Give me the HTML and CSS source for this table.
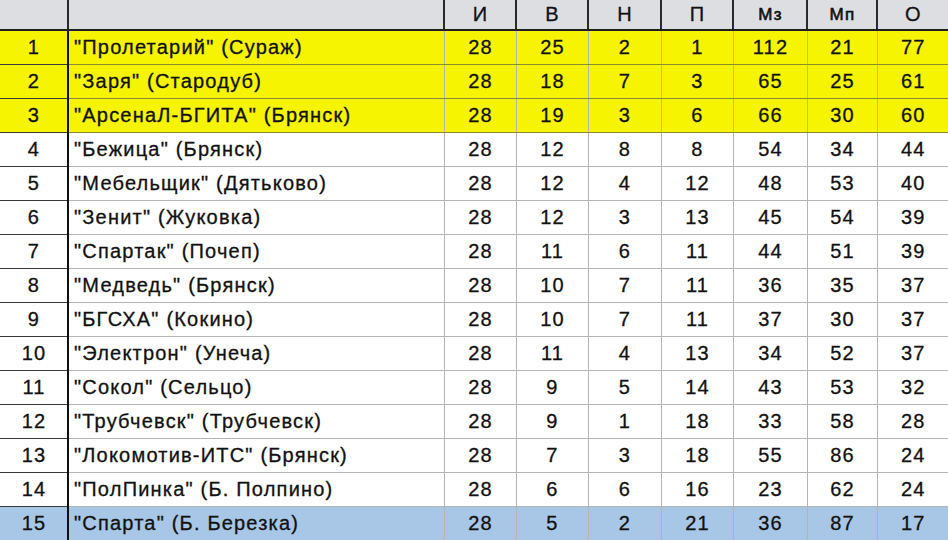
FILE: index.html
```html
<!DOCTYPE html>
<html lang="ru">
<head>
<meta charset="utf-8">
<title>Таблица</title>
<link rel="stylesheet" href="styles.css">
</head>
<body>
<table class="grid">
  <colgroup>
    <col class="c-num"><col class="c-name"><col class="c-a"><col class="c-a"><col class="c-b"><col class="c-a"><col class="c-c"><col class="c-d"><col class="c-e">
  </colgroup>
  <thead>
    <tr class="head">
      <th class="num"></th><th class="name"></th>
      <th>И</th><th>В</th><th>Н</th><th>П</th><th class="small">Мз</th><th class="small">Мп</th><th>О</th>
    </tr>
  </thead>
  <tbody>
    <tr class="yellow"><td class="num">1</td><td class="name">"Пролетарий" (Сураж)</td><td>28</td><td>25</td><td>2</td><td>1</td><td>112</td><td>21</td><td>77</td></tr>
    <tr class="yellow"><td class="num">2</td><td class="name">"Заря" (Стародуб)</td><td>28</td><td>18</td><td>7</td><td>3</td><td>65</td><td>25</td><td>61</td></tr>
    <tr class="yellow"><td class="num">3</td><td class="name">"АрсенаЛ-БГИТА" (Брянск)</td><td>28</td><td>19</td><td>3</td><td>6</td><td>66</td><td>30</td><td>60</td></tr>
    <tr><td class="num">4</td><td class="name">"Бежица" (Брянск)</td><td>28</td><td>12</td><td>8</td><td>8</td><td>54</td><td>34</td><td>44</td></tr>
    <tr><td class="num">5</td><td class="name">"Мебельщик" (Дятьково)</td><td>28</td><td>12</td><td>4</td><td>12</td><td>48</td><td>53</td><td>40</td></tr>
    <tr><td class="num">6</td><td class="name">"Зенит" (Жуковка)</td><td>28</td><td>12</td><td>3</td><td>13</td><td>45</td><td>54</td><td>39</td></tr>
    <tr><td class="num">7</td><td class="name">"Спартак" (Почеп)</td><td>28</td><td>11</td><td>6</td><td>11</td><td>44</td><td>51</td><td>39</td></tr>
    <tr><td class="num">8</td><td class="name">"Медведь" (Брянск)</td><td>28</td><td>10</td><td>7</td><td>11</td><td>36</td><td>35</td><td>37</td></tr>
    <tr><td class="num">9</td><td class="name">"БГСХА" (Кокино)</td><td>28</td><td>10</td><td>7</td><td>11</td><td>37</td><td>30</td><td>37</td></tr>
    <tr><td class="num">10</td><td class="name">"Электрон" (Унеча)</td><td>28</td><td>11</td><td>4</td><td>13</td><td>34</td><td>52</td><td>37</td></tr>
    <tr><td class="num">11</td><td class="name">"Сокол" (Сельцо)</td><td>28</td><td>9</td><td>5</td><td>14</td><td>43</td><td>53</td><td>32</td></tr>
    <tr><td class="num">12</td><td class="name">"Трубчевск" (Трубчевск)</td><td>28</td><td>9</td><td>1</td><td>18</td><td>33</td><td>58</td><td>28</td></tr>
    <tr><td class="num">13</td><td class="name">"Локомотив-ИТС" (Брянск)</td><td>28</td><td>7</td><td>3</td><td>18</td><td>55</td><td>86</td><td>24</td></tr>
    <tr><td class="num">14</td><td class="name">"ПолПинка" (Б. Полпино)</td><td>28</td><td>6</td><td>6</td><td>16</td><td>23</td><td>62</td><td>24</td></tr>
    <tr class="blue"><td class="num">15</td><td class="name">"Спарта" (Б. Березка)</td><td>28</td><td>5</td><td>2</td><td>21</td><td>36</td><td>87</td><td>17</td></tr>
  </tbody>
</table>
</body>
</html>
```

FILE: styles.css
```css
html, body {
  margin: 0;
  padding: 0;
  background: #ffffff;
}

.grid {
  width: 948px;
  table-layout: fixed;
  border-collapse: collapse;
  font-family: "Liberation Sans", Arial, sans-serif;
  font-size: 20px;
  letter-spacing: 1.2px;
  color: #111111;
  -webkit-text-stroke: 0.3px #111111;
}

.c-num { width: 68px; }
.c-name { width: 376px; }
.c-a { width: 72px; }
.c-b { width: 73px; }
.c-c { width: 74px; }
.c-d { width: 70px; }
.c-e { width: 71px; }

.grid th,
.grid td {
  padding: 0 0 0 1px;
  text-align: center;
  border-right: 1px solid #b4b4b4;
  border-bottom: 1px solid #b4b4b4;
  white-space: nowrap;
  overflow: hidden;
}

.head th {
  height: 29px;
  background: #dddee2;
  font-weight: normal;
  border-right: 2px solid #2a2a2a;
  border-bottom: 2px solid #1e1e1e;
}

.head th.small {
  font-size: 17px;
  -webkit-text-stroke: 0.6px #111111;
}

.head th:last-child {
  border-right: none;
}

.grid tbody td {
  height: 33px;
}

.grid td:last-child {
  border-right: none;
}

.grid td.num {
  border-right: 2px solid #101010;
  border-bottom: 1px solid #3a3a3a;
}

.grid td.name {
  text-align: left;
  padding-left: 5px;
}

.yellow td {
  background: #f6f400;
  border-bottom-color: #8c8a30;
}

.blue td {
  background: #a8c6e6;
}
```
